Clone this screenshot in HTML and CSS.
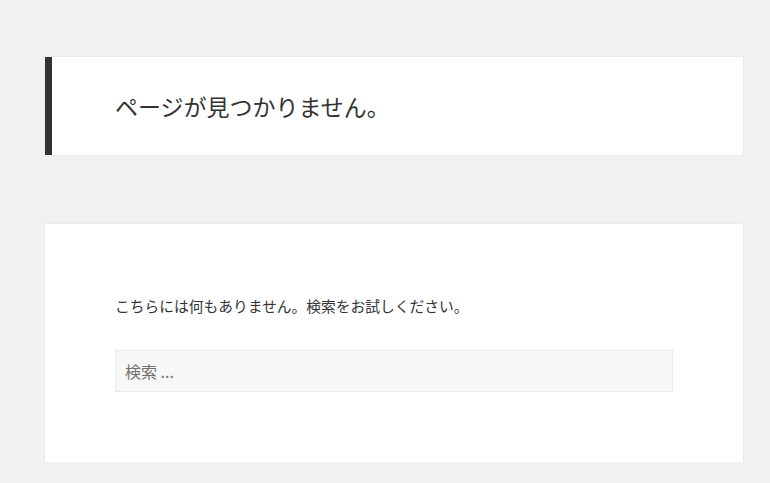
FILE: index.html
```html
<!DOCTYPE html>
<html lang="ja">
<head>
<meta charset="utf-8">
<title>ページが見つかりません</title>
<link rel="stylesheet" href="styles.css">
</head>
<body>
<main class="site-main">
  <header class="page-header">
    <h1 class="page-title">ページが見つかりません。</h1>
  </header>
  <section class="page-content">
    <p class="notice">こちらには何もありません。検索をお試しください。</p>
    <form class="search-form">
      <input class="search-field" type="search" placeholder="検索 ...">
    </form>
  </section>
</main>
</body>
</html>
```
FILE: styles.css
```css
html, body {
  margin: 0;
  padding: 0;
}
body {
  background: #f1f1f1;
  color: #333;
  font-family: "Noto Sans CJK JP", "Noto Sans", sans-serif;
}
.site-main {
  width: 698px;
  margin-left: 45px;
  padding-top: 57px;
  display: flex;
  flex-direction: column;
  gap: 69px;
}
.page-header {
  background: #fff;
  border-left: 7px solid #333;
  box-shadow: 0 0 1px rgba(0, 0, 0, 0.15);
  height: 98px;
  padding-left: 63px;
  display: flex;
  align-items: center;
}
.page-title {
  margin: 0;
  font-size: 23px;
  font-weight: 400;
  line-height: 1.4;
  color: #333;
}
.page-content {
  background: #fff;
  box-shadow: 0 0 1px rgba(0, 0, 0, 0.15);
  padding: 70px;
}
.notice {
  margin: 0 0 32px;
  font-size: 14.75px;
  line-height: 24px;
  color: #333;
}
.search-form {
  margin: 0;
}
.search-field {
  display: block;
  box-sizing: border-box;
  width: 100%;
  height: 42px;
  margin: 0;
  padding: 0 9px;
  background: #f7f7f7;
  border: 1px solid #eaeaea;
  border-radius: 0;
  font-family: "Noto Sans CJK JP", "Noto Sans", sans-serif;
  font-size: 16px;
  color: #333;
  outline: none;
  -webkit-appearance: none;
  appearance: none;
}
.search-field::placeholder {
  color: #707070;
}
```
